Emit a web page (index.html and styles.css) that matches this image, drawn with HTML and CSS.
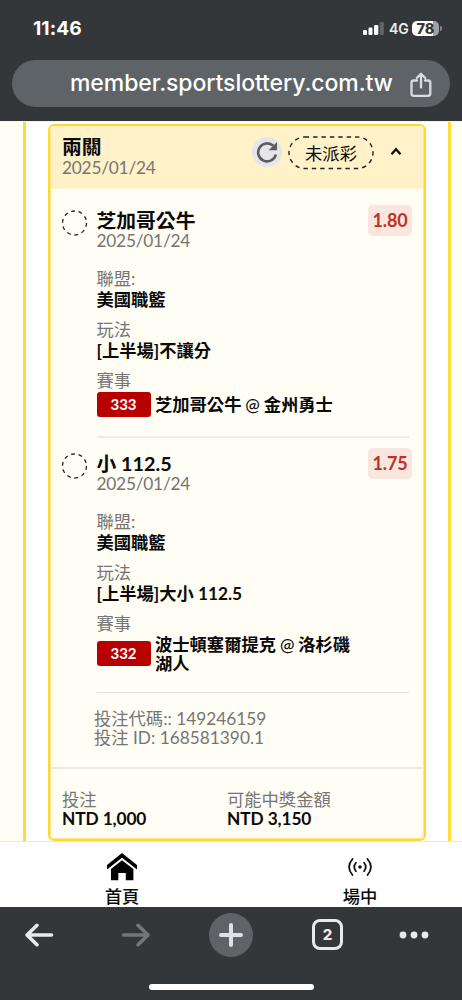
FILE: index.html
```html
<!DOCTYPE html>
<html lang="zh-Hant">
<head>
<meta charset="utf-8">
<title>member.sportslottery.com.tw</title>
<link rel="stylesheet" href="styles.css">
</head>
<body>
<div class="phone">
  <header class="top">
    <div class="status">
      <span class="clock">11:46</span>
      <div class="status-right">
        <svg class="signal" width="21" height="13" viewBox="0 0 21 13"><rect x="0" y="8" width="4" height="5" rx="1.2" fill="#fff"/><rect x="5.500" y="5.500" width="4" height="7.500" rx="1.200" fill="#fff"/><rect x="11" y="3" width="4.300" height="10" rx="1.200" fill="#fff"/><rect x="16.800" y="0" width="4" height="13" rx="1.200" fill="#626466"/></svg>
        <span class="net">4G</span>
        <span class="battery">78</span><span class="battery-tip"></span>
      </div>
    </div>
    <div class="address">
      <span class="url">member.sportslottery.com.tw</span>
      <svg class="share" width="22" height="26" viewBox="0 0 22 26" fill="none" stroke="#d9dce2" stroke-width="2.300" stroke-linecap="round" stroke-linejoin="round"><path d="M7 8.500H3.700Q1.500 8.500 1.500 10.700V21.500Q1.500 23.800 3.700 23.800H18Q20.300 23.800 20.300 21.500V10.700Q20.300 8.500 18 8.500H15M11 15.500V2M6.800 6L11 1.800 15.200 6"/></svg>
    </div>
  </header>

  <main class="page">
    <div class="rail rail-left"></div>
    <article class="card">
      <div class="card-head">
        <div>
          <h1 class="title">兩關</h1>
          <p class="date">2025/01/24</p>
        </div>
        <div class="head-actions">
          <span class="refresh"><svg width="22" height="22" viewBox="0 0 22 22"><path d="M17.300 4.800A9 9 0 1 0 19.900 13.500" fill="none" stroke="#5c5c5c" stroke-width="2.600"/><path d="M21 1V9.300H12.700Z" fill="#5c5c5c"/></svg></span>
          <span class="pill"><svg width="86" height="34" viewBox="0 0 86 34"><rect x="1" y="1" width="84" height="31.500" rx="15.700" fill="none" stroke="#222" stroke-width="1.400" stroke-dasharray="4.400 4"/></svg><b>未派彩</b></span>
          <svg class="caret" width="12" height="9" viewBox="0 0 12 9"><path d="M1.500 7.200L6 2.200 10.500 7.200" fill="none" stroke="#111" stroke-width="2.300"/></svg>
        </div>
      </div>

      <section class="bet">
        <svg class="ring" width="26" height="26" viewBox="0 0 26 26"><circle cx="12.500" cy="13" r="12" fill="none" stroke="#222" stroke-width="1.300" stroke-dasharray="3.800 3.740"/></svg>
        <div class="bet-body">
          <div class="bet-top">
            <div><h2 class="title">芝加哥公牛</h2><p class="date">2025/01/24</p></div>
            <span class="odds">1.80</span>
          </div>
          <dl class="facts">
            <div><dt>聯盟:</dt><dd>美國職籃</dd></div>
            <div><dt>玩法</dt><dd>[上半場]不讓分</dd></div>
            <div><dt>賽事</dt><dd class="match"><span class="code">333</span><span>芝加哥公牛 <i class="at">@</i> 金州勇士</span></dd></div>
          </dl>
        </div>
      </section>

      <section class="bet bet-second">
        <svg class="ring" width="26" height="26" viewBox="0 0 26 26"><circle cx="12.500" cy="13" r="12" fill="none" stroke="#222" stroke-width="1.300" stroke-dasharray="3.800 3.740"/></svg>
        <div class="bet-body">
          <div class="bet-top">
            <div><h2 class="title">小 112.5</h2><p class="date">2025/01/24</p></div>
            <span class="odds">1.75</span>
          </div>
          <dl class="facts">
            <div><dt>聯盟:</dt><dd>美國職籃</dd></div>
            <div><dt>玩法</dt><dd>[上半場]大小 112.5</dd></div>
            <div><dt>賽事</dt><dd class="match match-long"><span class="code">332</span><span>波士頓塞爾提克 <i class="at">@</i> 洛杉磯<br>湖人</span></dd></div>
          </dl>
        </div>
      </section>

      <div class="ids">
        <p>投注代碼:: 149246159</p>
        <p>投注 ID: 168581390.1</p>
      </div>

      <footer class="totals">
        <div><p>投注</p><strong>NTD 1,000</strong></div>
        <div><p>可能中獎金額</p><strong>NTD 3,150</strong></div>
      </footer>
    </article>
    <div class="rail rail-right"></div>
  </main>

  <nav class="tabs">
    <a class="tab"><svg width="32" height="28" viewBox="0 0 32 28"><path d="M1 12L16 0 31 12V16.500L16 4.700 1 16.500Z"/><path d="M5 16L16 7.300 27.400 16V27.300H19.800V20H12.300V27.300H5Z"/></svg><span>首頁</span></a>
    <a class="tab"><svg width="24" height="28" viewBox="0 0 24 28" fill="none" stroke="#111" stroke-width="1.800" stroke-linecap="round"><circle cx="12" cy="14" r="1.800" fill="#111" stroke="none"/><path d="M7.900 9.800Q4.600 14 7.900 18.200M16.100 9.800Q19.400 14 16.100 18.200M4.500 6Q-2.400 14 4.500 22M19.500 6Q26.400 14 19.500 22"/></svg><span>場中</span></a>
  </nav>

  <div class="browser-bar">
    <div class="tools">
      <svg width="30" height="26" viewBox="0 0 30 26" fill="none" stroke="#e6e9ee" stroke-width="3.600" stroke-linecap="round" stroke-linejoin="round"><path d="M27.500 13H3M13 3.300L3 13 13 22.700"/></svg>
      <svg width="30" height="26" viewBox="0 0 30 26" fill="none" stroke="#747678" stroke-width="3.600" stroke-linecap="round" stroke-linejoin="round"><path d="M2.500 13H27M17 3.300L27 13 17 22.700"/></svg>
      <span class="plus"><svg width="26" height="26" viewBox="0 0 26 26" stroke="#dfe1e6" stroke-width="4" stroke-linecap="round"><path d="M13 3V23M3 13H23"/></svg></span>
      <span class="count">2</span>
      <svg width="30" height="8" viewBox="0 0 30 8" fill="#e6e9ee"><circle cx="4" cy="4" r="3.400"/><circle cx="15" cy="4" r="3.400"/><circle cx="26" cy="4" r="3.400"/></svg>
    </div>
    <div class="home-line"></div>
  </div>
</div>
</body>
</html>
```

FILE: styles.css
```css
* { box-sizing: border-box; margin: 0; padding: 0; }
body {
  width: 462px; height: 1000px; overflow: hidden; background: #fff; color: #0a0a0a;
  font: 17.3px/21px Lato, "Noto Sans CJK TC", sans-serif;
}
svg { display: block; flex: none; }
.phone { width: 462px; height: 1000px; display: flex; flex-direction: column; }

.top { height: 121px; flex: none; background: #33373a; color: #fff; font-family: Inter, sans-serif; }
.status { height: 60px; padding: 0 20px 4px 33px; display: flex; justify-content: space-between; align-items: center; }
.clock { font-size: 19.2px; font-weight: 700; letter-spacing: 0.1px; }
.status-right { display: flex; align-items: center; }
.net { margin-left: 5px; width: 23px; font-size: 14px; font-weight: 600; color: #eee; }
.battery {
  width: 27px; height: 15px; border-radius: 5px; background: linear-gradient(90deg, #fff 78%, #a0a2a4 78%);
  color: #33373a; font-size: 14.5px; line-height: 15px; font-weight: 800; text-align: center;
}
.battery-tip { width: 2px; height: 5px; margin-left: 1px; background: #85888a; border-radius: 0 2px 2px 0; }
.address {
  height: 47px; margin: 0 12px; padding: 0 18px 0 58px; border-radius: 24px; background: #5e6367;
  display: flex; align-items: center; justify-content: space-between;
}
.url { font-size: 23px; line-height: 30px; font-weight: 500; white-space: nowrap; padding-bottom: 1px; letter-spacing: -0.07px; }
.share { margin-top: 2px; }

.page { height: 720px; flex: none; display: flex; border-top: 1px solid #f2f0ea; overflow: hidden; }
.rail { background: #fffdf4; flex: none; }
.rail-left { width: 26px; border-right: 3px solid #ffdc3d; margin-right: 22px; }
.rail-right { width: 14px; border-left: 3px solid #ffdc3d; margin-left: 22px; }
.card {
  width: 378px; height: 717px; margin-top: 2px; flex: none; border: 2px solid #ffd92f; border-radius: 6px;
  background: #fffdf4; overflow: hidden; box-shadow: inset 0 0 0 1px #ffe88c;
}
.card-head {
  height: 63px; margin: 0 1px; padding: 10px 18px 0 11px; background: #fff1c8;
  display: flex; justify-content: space-between;
}
.title { font-size: 19.8px; line-height: 21px; font-weight: 700; }
.bet .title { line-height: 20px; }
.date { color: #757575; line-height: 21px; letter-spacing: -0.22px; }
.head-actions { display: flex; align-items: center; height: 34px; }
.refresh {
  width: 30px; height: 30px; margin: -3px 6px 0 0; border-radius: 50%; background: #e5e6e9;
  display: flex; align-items: center; justify-content: center;
}
.pill { display: grid; place-items: center; width: 86px; height: 34px; }
.pill > * { grid-area: 1 / 1; }
.pill b { font-weight: 400; }
.caret { margin: -3px 3px 0 16px; }

.bet { height: 249px; padding: 21px 12px 0 11.5px; display: flex; }
.bet-second { padding-top: 15px; height: 255px; }
.ring { margin-top: 0; margin-right: 9px; }
.bet-body { flex: 1; border-bottom: 2px solid #efebe5; margin-right: 3px; }
.bet-second .bet-body { border-bottom-width: 1px; border-bottom-color: #e4e0da; }
.bet-top { display: flex; justify-content: space-between; margin-right: -3px; height: 58px; }
.odds {
  width: 44px; height: 31px; margin-top: -5px; border-radius: 5px; background: #f8e6df; color: #bd3228;
  font-size: 18px; line-height: 31px; font-weight: 700; text-align: center; letter-spacing: -0.1px;
}
.facts { display: flex; flex-direction: column; gap: 9px; }
.facts dt { color: #757575; }
.facts dd { font-weight: 700; white-space: nowrap; }
.match { display: flex; gap: 4.500px; align-items: center; height: 26px; word-spacing: -0.3px; }
.at { font-style: normal; font-weight: 500; }
.match-long { line-height: 19px; height: 39px; }
.code {
  width: 54px; height: 25px; border-radius: 3px; background: #b90000; color: #fff;
  font-size: 15px; line-height: 25px; font-weight: 700; text-align: center;
}
.ids { padding: 16px 0 0 44px; height: 74px; line-height: 19px; color: #757575; }
.totals {
  height: 72px; margin: 0 1px; padding: 21px 0 0 11px; border-top: 2px solid #ece8e4;
  display: grid; grid-template-columns: 165px 1fr; line-height: 19px;
}
.totals p { color: #757575; }
.totals strong { font-weight: 700; letter-spacing: -0.1px; }

.tabs { height: 66px; flex: none; border-top: 1px solid #e8e8e8; background: #fff; display: grid; grid-template-columns: 238px 238px; padding: 11px 0 0 3px; }
.tab { display: flex; flex-direction: column; align-items: center; gap: 5px; font-weight: 500; line-height: 22px; }

.browser-bar { height: 93px; background: #33373a; }
.tools { height: 77px; padding: 6px 0 0 24px; display: grid; grid-template-columns: 97px 88px 102px 88px 30px; align-items: start; }
.tools > svg { margin-top: 9px; }
.tools > svg:last-child { margin-top: 18px; }
.plus { width: 44px; height: 44px; border-radius: 50%; background: #5e6367; display: grid; place-items: center; }
.count {
  width: 31px; height: 31px; margin: 6px 0 0 1px; border: 3px solid #e6e9ee; border-radius: 8px; color: #e6e9ee;
  font: 800 15px/25px Inter, sans-serif; text-align: center;
}
.home-line { width: 165px; height: 6px; margin: 0 auto; border-radius: 3px; background: #fff; }
```
